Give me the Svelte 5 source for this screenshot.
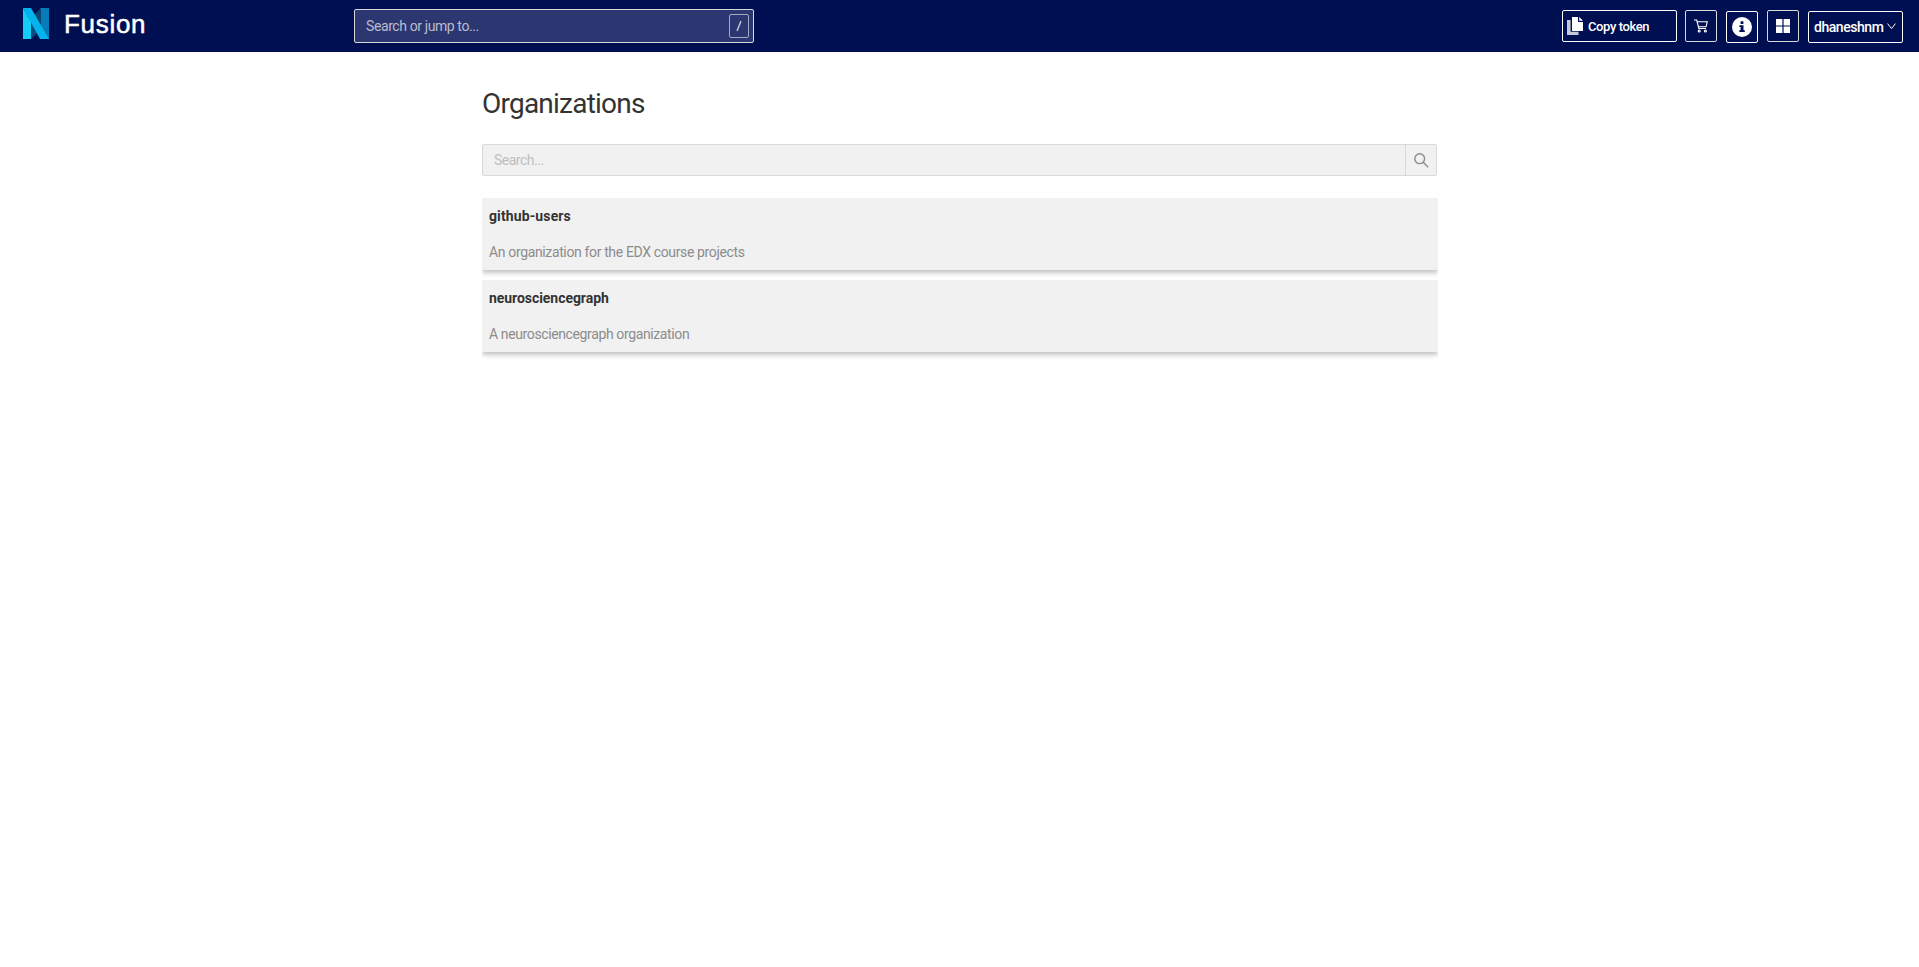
<script>
  const organizations = [
    { label: 'github-users', description: 'An organization for the EDX course projects', title: 'users', desc: 'edx' },
    { label: 'neurosciencegraph', description: 'A neurosciencegraph organization', title: 'graph', desc: 'neuro' }
  ];
</script>

<header>
  <a class="brand" href="#home">
    <svg class="logo" width="28" height="32" viewBox="0 0 28 32">
      <path d="M17 0H26V31H17Z" fill="#087cba" />
      <path d="M9 9L18 0V18Z" fill="#07476f" />
      <path d="M8 14L16 23L8 31Z" fill="#075083" />
      <path d="M0 0H8L26 31H17Z" fill="#04b2ed" />
      <path d="M0 0L8 14V31H0Z" fill="#12cdf4" />
    </svg>
    <span class="name">Fusion</span>
  </a>
  <div class="jump">
    <span class="jump-text">Search or jump to...</span>
    <span class="key"><svg width="8" height="12" viewBox="0 0 8 12"><path d="M6 1L2 11" stroke="#c0c3d2" stroke-width="1.5" /></svg></span>
  </div>
  <nav>
    <button class="copy">
      <svg width="16" height="18" viewBox="0 0 16 18">
        <path d="M0 3H3.6V14.8H11.5V18H0Z" fill="#c5c8d6" />
        <path d="M5 0H11V5H16V14H5Z M12.2 0L16 3.8H12.2Z" fill="#fff" />
      </svg>
      <span>Copy token</span>
    </button>
    <button class="square cart">
      <svg width="14" height="14" viewBox="0 0 14 14" fill="none" stroke="#fff" stroke-width="1.1">
        <path d="M0 1H2.7L4.8 9.5H12" /><path d="M3 2.8H13.3L12 7.8H4.3" />
        <circle cx="5.2" cy="12" r="1" /><circle cx="11.4" cy="12" r="1" />
      </svg>
    </button>
    <button class="square info low">
      <svg width="20" height="20" viewBox="0 0 20 20">
        <circle cx="10" cy="10" r="10" fill="#fff" />
        <path d="M8.6 4.2H11.4V6.9H8.6Z M7.4 8.2H11.5V13.2H12.8V15H7.3V13.2H8.6V10H7.4Z" fill="#000f52" />
      </svg>
    </button>
    <button class="square grid">
      <svg width="14" height="14" viewBox="0 0 14 14" fill="#fff">
        <path d="M0 0H6.4V6.4H0ZM7.6 0H14V6.4H7.6ZM0 7.6H6.4V14H0ZM7.6 7.6H14V14H7.6Z" />
      </svg>
    </button>
    <button class="user low">
      <span>dhaneshnm</span>
      <svg width="9" height="7" viewBox="0 0 9 7"><path d="M.6 .6L4.5 5.6L8.4 .6" fill="none" stroke="#fff" /></svg>
    </button>
  </nav>
</header>

<main>
  <h1>Organizations</h1>
  <div class="search">
    <span class="placeholder">Search...</span>
    <span class="lens">
      <svg width="15" height="15" viewBox="0 0 15 15" fill="none" stroke="#8b8b8b" stroke-width="1.4"><circle cx="5.7" cy="5.7" r="4.9" /><path d="M9.2 9.2L14.2 14.2" /></svg>
    </span>
  </div>
  <ul>
    {#each organizations as org}
      <li>
        <p class="title"><span class={org.title}>{org.label}</span></p>
        <p class="description"><span class={org.desc}>{org.description}</span></p>
      </li>
    {/each}
  </ul>
</main>

<style>
  :global(body) { margin: 0; background: #fff; font-family: Roboto, sans-serif; font-size: 14px; }
  * { box-sizing: border-box; }
  header { height: 52px; background: #000f52; display: flex; align-items: flex-start; padding-right: 16px; }
  .brand { width: 354px; display: flex; padding: 8px 0 0 23px; text-decoration: none; color: #fff; }
  .name { margin-left: 13px; font: 26px/32px "Liberation Sans", sans-serif; letter-spacing: .7px; -webkit-text-stroke: .5px #fff; }
  .jump { width: 400px; height: 34px; margin-top: 9px; border: 1px solid #d9d9d9; border-radius: 2px; background: #2c3671; color: #babdcc; display: flex; align-items: center; justify-content: space-between; padding: 0 4px 0 11px; }
  .jump-text { letter-spacing: -.4px; }
  .key { width: 20px; height: 24px; border: 1px solid #a4a8c0; border-radius: 2px; display: grid; place-items: center; }
  nav { margin-left: auto; display: flex; padding-top: 10px; }
  button { height: 32px; padding: 0; border: 1px solid #fff; border-radius: 2px; background: transparent; color: #fff; font: 500 14px Roboto, sans-serif; display: flex; align-items: center; }
  .low { margin-top: 1px; }
  .copy { width: 115px; padding-left: 4px; margin-right: 8px; font-size: 13px; }
  .copy span { margin-left: 5px; letter-spacing: -.4px; }
  .square { width: 32px; justify-content: center; }
  .cart { margin-right: 9px; border-color: #d9d9d9; }
  .info { margin-right: 9px; }
  .grid { margin-right: 9px; border-color: #d9d9d9; }
  .user { width: 95px; padding-left: 5px; justify-content: space-between; padding-right: 6px; }
  .user span { letter-spacing: -.45px; padding-bottom: 1px; }
  .user svg { margin-bottom: 2px; }
  main { width: 956px; margin: 0 auto 0 482px; padding: 30px 0 24px; }
  h1 { margin: 0; height: 44px; font: 400 28px/44px Roboto, sans-serif; color: #333; letter-spacing: -.77px; }
  .search { width: 955px; height: 32px; margin-top: 18px; border: 1px solid #d9d9d9; border-radius: 2px; background: #f1f1f1; color: #bfbfbf; display: flex; align-items: center; justify-content: space-between; padding-left: 11px; }
  .placeholder { letter-spacing: -.5px; }
  .lens { width: 31px; height: 30px; border-left: 1px solid #d9d9d9; display: grid; place-items: center; }
  ul { list-style: none; margin: 22px 0 0; padding: 0; display: grid; gap: 10px; }
  li { height: 72px; background: #f1f1f1; border-radius: 2px 2px 0 0; padding: 7px 7px 0; box-shadow: 0 3px 5px rgba(0, 0, 0, .24); clip-path: inset(0 0 -8px 0); }
  p { margin: 0; line-height: 22px; }
  .title { font-weight: 700; color: #333; }
  .users { letter-spacing: .12px; }
  .graph { letter-spacing: -.05px; }
  .description { margin-top: 14px; color: #8c8c8c; }
  .edx { letter-spacing: -.36px; }
  .neuro { letter-spacing: -.38px; }
</style>
